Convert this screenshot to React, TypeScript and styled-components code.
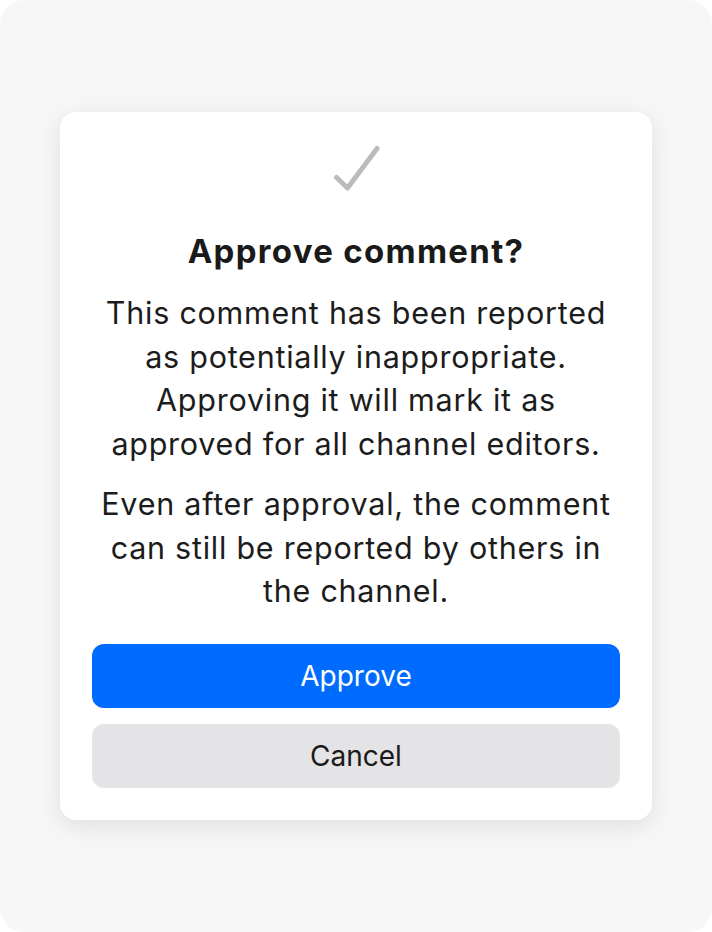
import React from "react";
import styled, { createGlobalStyle } from "styled-components";

const GlobalStyle = createGlobalStyle`
  html, body {
    margin: 0;
    padding: 0;
    background: #ffffff;
  }
  body {
    font-family: Inter, "Noto Sans", "Liberation Sans", sans-serif;
    -webkit-font-smoothing: antialiased;
  }
`;

const Backdrop = styled.div`
  width: 712px;
  height: 932px;
  box-sizing: border-box;
  background: #f7f7f7;
  border-radius: 24px;
  display: flex;
  align-items: flex-start;
  justify-content: center;
  padding-top: 112px;
`;

const Dialog = styled.div`
  width: 592px;
  box-sizing: border-box;
  background: #ffffff;
  border-radius: 16px;
  box-shadow: 0 6px 24px rgba(0, 0, 0, 0.1);
  padding: 32px;
  display: flex;
  flex-direction: column;
  align-items: center;
`;

const IconWrap = styled.div`
  width: 48px;
  height: 48px;
  display: flex;
  align-items: center;
  justify-content: center;
`;

const Title = styled.h2`
  margin: 39px 0 0;
  font-size: 33px;
  line-height: 40px;
  font-weight: 700;
  letter-spacing: 1.3px;
  color: #1a1a1a;
  text-align: center;
`;

const Text = styled.p<{ $gap: number }>`
  margin: ${(p) => p.$gap}px 0 0;
  font-size: 30.5px;
  line-height: 43.5px;
  font-weight: 400;
  letter-spacing: 0.75px;
  color: #1c1c1c;
  text-align: center;
`;

const Actions = styled.div`
  width: 100%;
  display: flex;
  flex-direction: column;
  gap: 16px;
  margin-top: 31px;
`;

const Button = styled.button<{ $primary?: boolean }>`
  width: 100%;
  height: 64px;
  border: none;
  border-radius: 12px;
  font-family: inherit;
  font-size: 28px;
  font-weight: 400;
  cursor: pointer;
  background: ${(p) => (p.$primary ? "#006cff" : "#e4e4e6")};
  color: ${(p) => (p.$primary ? "#ffffff" : "#1a1a1a")};
`;

const CheckIcon = () => (
  <svg width="48" height="48" viewBox="0 0 48 48" fill="none">
    <path
      d="M4.5 33.5 L15.5 44 L45 4.5"
      stroke="#bbbbbb"
      strokeWidth="5"
      strokeLinecap="round"
      strokeLinejoin="round"
    />
  </svg>
);

export default function App() {
  return (
    <>
      <GlobalStyle />
      <Backdrop>
        <Dialog>
          <IconWrap>
            <CheckIcon />
          </IconWrap>
          <Title>Approve comment?</Title>
          <Text $gap={20}>
            This comment has been reported as potentially inappropriate.
            Approving it will mark it as approved for all channel editors.
          </Text>
          <Text $gap={17}>
            Even after approval, the comment can still be reported by others in
            the channel.
          </Text>
          <Actions>
            <Button $primary>Approve</Button>
            <Button>Cancel</Button>
          </Actions>
        </Dialog>
      </Backdrop>
    </>
  );
}
